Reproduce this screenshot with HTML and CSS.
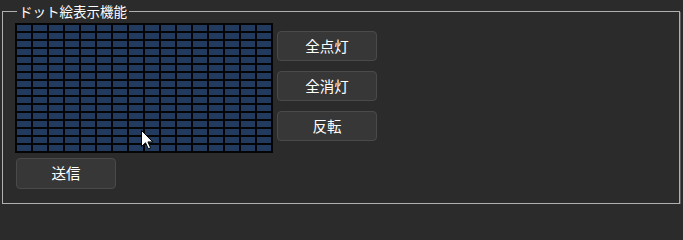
FILE: index.html
```html
<!DOCTYPE html>
<html lang="ja">
<head>
<meta charset="utf-8">
<title>ドット絵表示機能</title>
<link rel="stylesheet" href="styles.css">
</head>
<body>
<fieldset class="group">
  <legend class="group-title">ドット絵表示機能</legend>
  <div class="top-row">
    <div class="matrix">
      <span class="dot"></span><span class="dot"></span><span class="dot"></span><span class="dot"></span><span class="dot"></span><span class="dot"></span><span class="dot"></span><span class="dot"></span><span class="dot"></span><span class="dot"></span><span class="dot"></span><span class="dot"></span><span class="dot"></span><span class="dot"></span><span class="dot"></span><span class="dot"></span>
      <span class="dot"></span><span class="dot"></span><span class="dot"></span><span class="dot"></span><span class="dot"></span><span class="dot"></span><span class="dot"></span><span class="dot"></span><span class="dot"></span><span class="dot"></span><span class="dot"></span><span class="dot"></span><span class="dot"></span><span class="dot"></span><span class="dot"></span><span class="dot"></span>
      <span class="dot"></span><span class="dot"></span><span class="dot"></span><span class="dot"></span><span class="dot"></span><span class="dot"></span><span class="dot"></span><span class="dot"></span><span class="dot"></span><span class="dot"></span><span class="dot"></span><span class="dot"></span><span class="dot"></span><span class="dot"></span><span class="dot"></span><span class="dot"></span>
      <span class="dot"></span><span class="dot"></span><span class="dot"></span><span class="dot"></span><span class="dot"></span><span class="dot"></span><span class="dot"></span><span class="dot"></span><span class="dot"></span><span class="dot"></span><span class="dot"></span><span class="dot"></span><span class="dot"></span><span class="dot"></span><span class="dot"></span><span class="dot"></span>
      <span class="dot"></span><span class="dot"></span><span class="dot"></span><span class="dot"></span><span class="dot"></span><span class="dot"></span><span class="dot"></span><span class="dot"></span><span class="dot"></span><span class="dot"></span><span class="dot"></span><span class="dot"></span><span class="dot"></span><span class="dot"></span><span class="dot"></span><span class="dot"></span>
      <span class="dot"></span><span class="dot"></span><span class="dot"></span><span class="dot"></span><span class="dot"></span><span class="dot"></span><span class="dot"></span><span class="dot"></span><span class="dot"></span><span class="dot"></span><span class="dot"></span><span class="dot"></span><span class="dot"></span><span class="dot"></span><span class="dot"></span><span class="dot"></span>
      <span class="dot"></span><span class="dot"></span><span class="dot"></span><span class="dot"></span><span class="dot"></span><span class="dot"></span><span class="dot"></span><span class="dot"></span><span class="dot"></span><span class="dot"></span><span class="dot"></span><span class="dot"></span><span class="dot"></span><span class="dot"></span><span class="dot"></span><span class="dot"></span>
      <span class="dot"></span><span class="dot"></span><span class="dot"></span><span class="dot"></span><span class="dot"></span><span class="dot"></span><span class="dot"></span><span class="dot"></span><span class="dot"></span><span class="dot"></span><span class="dot"></span><span class="dot"></span><span class="dot"></span><span class="dot"></span><span class="dot"></span><span class="dot"></span>
      <span class="dot"></span><span class="dot"></span><span class="dot"></span><span class="dot"></span><span class="dot"></span><span class="dot"></span><span class="dot"></span><span class="dot"></span><span class="dot"></span><span class="dot"></span><span class="dot"></span><span class="dot"></span><span class="dot"></span><span class="dot"></span><span class="dot"></span><span class="dot"></span>
      <span class="dot"></span><span class="dot"></span><span class="dot"></span><span class="dot"></span><span class="dot"></span><span class="dot"></span><span class="dot"></span><span class="dot"></span><span class="dot"></span><span class="dot"></span><span class="dot"></span><span class="dot"></span><span class="dot"></span><span class="dot"></span><span class="dot"></span><span class="dot"></span>
      <span class="dot"></span><span class="dot"></span><span class="dot"></span><span class="dot"></span><span class="dot"></span><span class="dot"></span><span class="dot"></span><span class="dot"></span><span class="dot"></span><span class="dot"></span><span class="dot"></span><span class="dot"></span><span class="dot"></span><span class="dot"></span><span class="dot"></span><span class="dot"></span>
      <span class="dot"></span><span class="dot"></span><span class="dot"></span><span class="dot"></span><span class="dot"></span><span class="dot"></span><span class="dot"></span><span class="dot"></span><span class="dot"></span><span class="dot"></span><span class="dot"></span><span class="dot"></span><span class="dot"></span><span class="dot"></span><span class="dot"></span><span class="dot"></span>
      <span class="dot"></span><span class="dot"></span><span class="dot"></span><span class="dot"></span><span class="dot"></span><span class="dot"></span><span class="dot"></span><span class="dot"></span><span class="dot"></span><span class="dot"></span><span class="dot"></span><span class="dot"></span><span class="dot"></span><span class="dot"></span><span class="dot"></span><span class="dot"></span>
      <span class="dot"></span><span class="dot"></span><span class="dot"></span><span class="dot"></span><span class="dot"></span><span class="dot"></span><span class="dot"></span><span class="dot"></span><span class="dot"></span><span class="dot"></span><span class="dot"></span><span class="dot"></span><span class="dot"></span><span class="dot"></span><span class="dot"></span><span class="dot"></span>
      <span class="dot"></span><span class="dot"></span><span class="dot"></span><span class="dot"></span><span class="dot"></span><span class="dot"></span><span class="dot"></span><span class="dot"></span><span class="dot"></span><span class="dot"></span><span class="dot"></span><span class="dot"></span><span class="dot"></span><span class="dot"></span><span class="dot"></span><span class="dot"></span>
      <span class="dot"></span><span class="dot"></span><span class="dot"></span><span class="dot"></span><span class="dot"></span><span class="dot"></span><span class="dot"></span><span class="dot"></span><span class="dot"></span><span class="dot"></span><span class="dot"></span><span class="dot"></span><span class="dot"></span><span class="dot"></span><span class="dot"></span><span class="dot"></span>
    </div>
    <div class="side-buttons">
      <button class="btn" type="button">全点灯</button>
      <button class="btn" type="button">全消灯</button>
      <button class="btn" type="button">反転</button>
    </div>
  </div>
  <button class="btn btn-send" type="button">送信</button>
</fieldset>
<svg class="cursor" width="13" height="20" viewBox="0 0 13 20" aria-hidden="true">
  <path d="M0.5 0.5 L0.5 16.5 L4.5 12.8 L7.3 18.8 L9.6 17.8 L6.9 11.9 L11.8 11.9 Z" fill="#ffffff" stroke="#000000" stroke-width="1" stroke-linejoin="miter"/>
</svg>
</body>
</html>
```

FILE: styles.css
```css
html, body {
  margin: 0;
  padding: 0;
  background: #2b2b2b;
}

body {
  padding: 3px 0 0 2px;
  font-family: "Noto Sans CJK JP", "Noto Sans", sans-serif;
  color: #ffffff;
}

.group {
  box-sizing: border-box;
  width: 678px;
  height: 201px;
  margin: 0;
  padding: 4px 0 0 12px;
  border: 1px solid #b0b0b0;
  box-shadow: 1px 1px 0 #5a5a5a;
  min-width: 0;
}

.group-title {
  padding: 0 2px 0 2px;
  margin-left: 2px;
  font-size: 13.5px;
  line-height: 16px;
  color: #ffffff;
}

.top-row {
  display: flex;
  align-items: flex-start;
  gap: 4px;
}

.matrix {
  display: grid;
  grid-template-columns: repeat(16, 14px);
  grid-auto-rows: 6px;
  gap: 2px;
  padding: 2px;
  background: #050505;
}

.dot {
  display: block;
  background: #213a5e;
}

.side-buttons {
  display: flex;
  flex-direction: column;
  gap: 10px;
  margin-top: 8px;
}

.btn {
  box-sizing: border-box;
  width: 100px;
  height: 30px;
  margin: 0;
  padding: 0;
  background: #373737;
  border: 1px solid #4a4a4a;
  border-radius: 4px;
  color: #ffffff;
  font-family: "Noto Sans CJK JP", "Noto Sans", sans-serif;
  font-size: 14.5px;
  line-height: 1;
}

.btn-send {
  display: block;
  height: 31px;
  margin: 5px 0 0 1px;
}

.cursor {
  position: absolute;
  left: 141px;
  top: 130px;
}
```
